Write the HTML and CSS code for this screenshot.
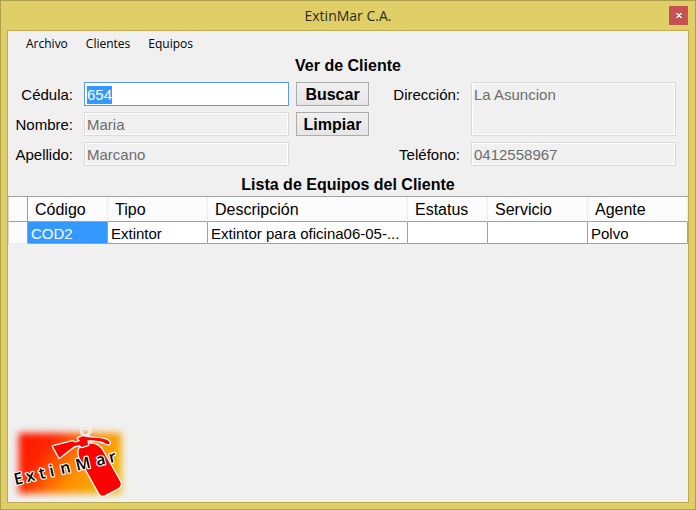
FILE: index.html
```html
<!DOCTYPE html>
<html lang="es">
<head>
<meta charset="utf-8">
<meta name="viewport" content="width=device-width, initial-scale=1">
<title>ExtinMar C.A.</title>
<link rel="stylesheet" href="styles.css">
</head>
<body>
<div class="window">
  <header class="titlebar">
    <h1 class="titlebar-text">ExtinMar C.A.</h1>
    <button class="close" type="button" aria-label="Cerrar">
      <svg width="6" height="6" viewBox="0 0 6 6" shape-rendering="crispEdges" fill="#fff"><path d="M0 0h2v1h2V0h2v1H5v1H4v1h1v1h1v1H4V4H2v1H0V4h1V3h1V2H1V1H0z"/></svg>
    </button>
  </header>
  <main class="client">
    <nav class="menu">
      <button type="button">Archivo</button>
      <button type="button">Clientes</button>
      <button type="button">Equipos</button>
    </nav>
    <h2 class="heading">Ver de Cliente</h2>
    <form class="form">
      <label class="r1 c1" for="cedula">Cédula:</label>
      <input class="r1 c2" id="cedula" type="text" value="654">
      <button class="r1 c3" type="button">Buscar</button>
      <label class="r1 c4" for="direccion">Dirección:</label>
      <textarea class="tall c5" id="direccion" disabled>La Asuncion</textarea>
      <label class="r2 c1" for="nombre">Nombre:</label>
      <input class="r2 c2" id="nombre" type="text" value="Maria" disabled>
      <button class="r2 c3" type="button">Limpiar</button>
      <label class="r3 c1" for="apellido">Apellido:</label>
      <input class="r3 c2" id="apellido" type="text" value="Marcano" disabled>
      <label class="r3 c4" for="telefono">Teléfono:</label>
      <input class="r3 c5" id="telefono" type="text" value="0412558967" disabled>
    </form>
    <h2 class="heading list-heading">Lista de Equipos del Cliente</h2>
    <table class="grid">
      <colgroup>
        <col class="w-head"><col class="w-small"><col class="w-mid"><col class="w-wide"><col class="w-small"><col class="w-mid"><col class="w-mid">
      </colgroup>
      <thead>
        <tr><td class="corner"></td><th>Código</th><th>Tipo</th><th>Descripción</th><th>Estatus</th><th>Servicio</th><th>Agente</th></tr>
      </thead>
      <tbody>
        <tr><td class="rowhead"></td><td class="selected">COD2</td><td>Extintor</td><td>Extintor para oficina06-05-...</td><td></td><td></td><td>Polvo</td></tr>
      </tbody>
    </table>
    <svg class="logo" width="120" height="75" viewBox="30 27 360 225" role="img" aria-label="ExtinMar">
      <defs>
        <linearGradient id="fire" x1="0" y1="0.2" x2="1" y2="0.6">
          <stop offset="0" stop-color="#ff1800"/>
          <stop offset="0.25" stop-color="#ff2600"/>
          <stop offset="0.6" stop-color="#ff8a00"/>
          <stop offset="1" stop-color="#f0b800"/>
        </linearGradient>
        <filter id="soft" x="-15%" y="-20%" width="130%" height="140%"><feGaussianBlur stdDeviation="11"/></filter>
      </defs>
      <rect x="56" y="54" width="308" height="182" fill="url(#fire)" filter="url(#soft)"/>
      <g fill="#f00" stroke="#fff" stroke-width="8" stroke-linejoin="round" paint-order="stroke">
        <circle cx="257" cy="49" r="13" fill="none" stroke-width="9"/>
        <circle cx="257" cy="49" r="13" fill="none" stroke="#e8a49c" stroke-width="2"/>
        <path d="M242 94C250 86 262 86 274 86C290 87 300 94 307 106L361 201Q366 213 354 220L314 241Q303 246 297 234L239 130Q231 109 242 94Z"/>
        <path d="M159 94L218 79L226 83L240 78L234 70L248 64L265 67C285 69 307 69 321 75Q333 81 328 87Q321 89 313 83C297 77 280 76 262 76L264 90L244 96L239 90L222 94L178 128Z"/>
      </g>
      <text class="logo-text" transform="translate(46 210) rotate(-13)" x="0 37 77 109 142 190 252 292" y="0">ExtinMar</text>
    </svg>
  </main>
</div>
<script src="main.js"></script>
</body>
</html>
```
FILE: styles.css
```css
* { box-sizing: border-box; }
body {
  margin: 0;
  font: 15px/18px "Liberation Sans", Arial, sans-serif;
  color: #000;
}
.window {
  display: flex;
  flex-direction: column;
  min-height: 100vh;
  padding: 0 6px 6px;
  border: 1px solid #ae9f4e;
  background: #e0cf66;
}
.titlebar {
  display: grid;
  grid-template-columns: 1fr auto 1fr;
  align-items: center;
  height: 29px;
}
.titlebar-text {
  grid-column: 2;
  margin: 0;
  font: 14px/20px "Open Sans", sans-serif;
  color: #2b2a20;
}
.close {
  display: grid;
  place-items: center;
  justify-self: end;
  width: 19px;
  height: 19px;
  margin-right: 1px;
  padding: 0;
  border: 0;
  background: #c75050;
}
.client {
  flex: 1;
  display: flex;
  flex-direction: column;
  border: 1px solid #bbaa50;
  background: #f0f0f0;
}
.menu {
  display: flex;
  gap: 18px;
  padding: 4px 18px 3px;
}
.menu button {
  padding: 0;
  border: 0;
  background: none;
  color: #000;
  font: 12px/18px "Open Sans", sans-serif;
}
.heading {
  margin: 0;
  font-size: 16px;
  line-height: 20px;
  text-align: center;
}
.form {
  display: grid;
  grid-template-columns: 69px 1fr 73px 88px 1fr;
  grid-template-rows: repeat(3, 24px);
  gap: 6px 7px;
  padding: 6px 12px 0 0;
}
.r1 { grid-row: 1; }
.r2 { grid-row: 2; }
.r3 { grid-row: 3; }
.tall { grid-row: 1 / span 2; }
.c1 { grid-column: 1; }
.c2 { grid-column: 2; }
.c3 { grid-column: 3; }
.c4 { grid-column: 4; }
.c5 { grid-column: 5; }
.form label {
  padding: 4px 4px 0 0;
  text-align: right;
}
.form input,
.form textarea {
  width: 100%;
  min-width: 0;
  margin: 0;
  padding: 3px 2px 1px;
  border: 1px solid #569de5;
  border-radius: 0;
  outline: 0;
  background: #fff;
  color: #000;
  font: inherit;
  resize: none;
}
.form :disabled {
  border-color: #d9d9d9;
  background: #f0f0f0;
  box-shadow: inset 0 0 0 1px #fff;
  color: #6d6d6d;
}
.form ::selection {
  background: #39f;
  color: #fff;
}
.form button {
  padding: 2px 0 0;
  border: 1px solid #acacac;
  background: linear-gradient(#f0f0f0, #e5e5e5);
  color: #000;
  font: inherit;
  font-size: 16px;
  font-weight: bold;
}
.list-heading { margin-top: 9px; }
.grid {
  width: 100%;
  margin-top: 1px;
  border-spacing: 0;
  border-top: 1px solid #a0a0a0;
  table-layout: fixed;
}
.w-head { width: 20px; }
.w-small { width: 80px; }
.w-mid { width: 100px; }
.w-wide { width: 200px; }
.grid th,
.grid td {
  padding: 0 3px;
  border-right: 1px solid #a0a0a0;
  border-bottom: 1px solid #a0a0a0;
  background: #fff;
  text-align: left;
  white-space: nowrap;
}
.grid th {
  height: 25px;
  padding: 1px 7px 0;
  border-right-color: #e5edf7;
  background: #fcfcfc;
  font-size: 16px;
  font-weight: normal;
}
.grid td { height: 22px; padding-top: 2px; }
.grid .corner,
.grid .rowhead {
  border-left: 1px solid #d8dade;
  background: #fcfcfc;
}
.grid .rowhead { border-bottom-color: #e5edf7; }
.grid .selected {
  background: #39f;
  color: #fff;
}
.logo {
  display: block;
  margin: auto 0 3px 2px;
}
.logo-text {
  font: 600 48px "Open Sans", sans-serif;
  fill: #000;
  stroke: #fff;
  stroke-width: 7px;
  stroke-linejoin: round;
  paint-order: stroke;
}
```
FILE: main.js
```js
const cedula = document.getElementById("cedula");
cedula.focus();
cedula.select();
```
